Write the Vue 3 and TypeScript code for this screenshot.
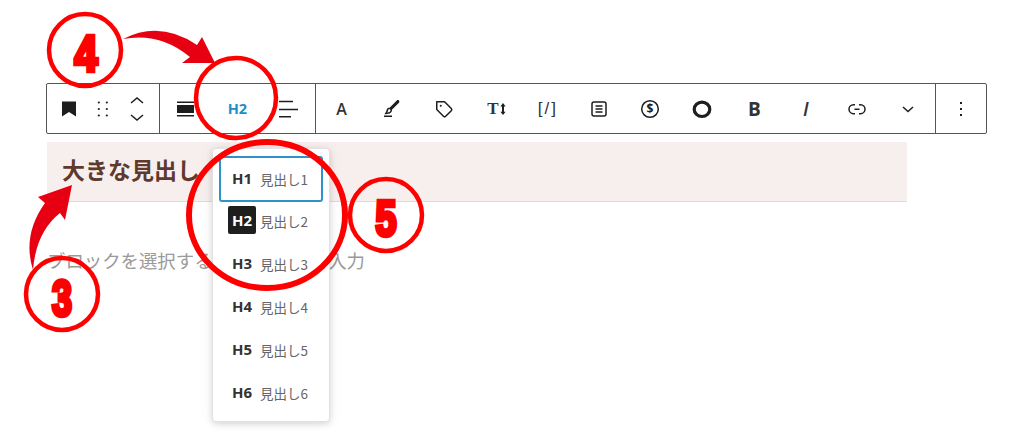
<script setup lang="ts">
interface HeadingItem {
  tag: string
  label: string
  state?: 'focus' | 'active'
}

const headings: HeadingItem[] = [
  { tag: 'H1', label: '見出し1', state: 'focus' },
  { tag: 'H2', label: '見出し2', state: 'active' },
  { tag: 'H3', label: '見出し3' },
  { tag: 'H4', label: '見出し4' },
  { tag: 'H5', label: '見出し5' },
  { tag: 'H6', label: '見出し6' }
]
</script>

<template>
  <div class="page">
    <div class="toolbar">
      <div class="group group-block">
        <button class="tool narrow">
          <svg viewBox="0 0 24 24" width="24" height="24"><path d="M5 4.5h14v15l-7-4.6-7 4.6z" /></svg>
        </button>
        <button class="tool narrow">
          <svg viewBox="0 0 24 24" width="24" height="24">
            <circle cx="7.8" cy="5.5" r="1.1" /><circle cx="15.8" cy="5.5" r="1.1" />
            <circle cx="7.8" cy="12" r="1.1" /><circle cx="15.8" cy="12" r="1.1" />
            <circle cx="7.8" cy="18.5" r="1.1" /><circle cx="15.8" cy="18.5" r="1.1" />
          </svg>
        </button>
        <button class="tool narrow">
          <svg viewBox="0 0 24 32" width="24" height="32" class="line">
            <path d="M6 10 12 5l6 5M6 22l6 5 6-5" />
          </svg>
        </button>
      </div>

      <div class="group">
        <button class="tool">
          <svg viewBox="0 0 24 24" width="24" height="24">
            <path d="M4 4.5h17V6H4zM4 8h17v8H4zM4 18h17v1.5H4z" />
          </svg>
        </button>
        <button class="tool heading-now">H2</button>
        <button class="tool">
          <svg viewBox="0 0 24 24" width="24" height="24">
            <path d="M3 3.8h14v1.5H3zM3 11.8h19v1.5H3zM3 19h12v1.5H3z" />
          </svg>
        </button>
      </div>

      <div class="group">
        <button class="tool glyph-a">A</button>
        <button class="tool">
          <svg viewBox="0 0 24 24" width="24" height="24">
            <path d="M4 20h8v-1.5H4V20zM18.9 3.5c-.6-.6-1.5-.6-2.1 0l-7.2 7.2c-.4-.1-.7 0-1.1.1-.5.2-1.5.7-1.9 2.2-.4 1.7-.8 2.2-1.1 2.7-.1.1-.2.3-.3.4l-.6 1.1H6c2 0 3.4-.4 4.7-1.4.8-.6 1.2-1.4 1.3-2.3 0-.3 0-.5-.1-.7L19 5.7c.5-.6.5-1.6-.1-2.2zM9.7 14.7c-.7.5-1.5.8-2.4 1 .2-.5.5-1.2.8-2.3.2-.6.4-1 .8-1.1.5-.1 1 .1 1.3.3.2.2.3.5.2.8 0 .3-.1.9-.7 1.3z" />
          </svg>
        </button>
        <button class="tool">
          <svg viewBox="0 0 24 24" width="24" height="24">
            <path d="M4.75 4a.75.75 0 0 0-.75.75v7.826c0 .2.08.39.22.53l6.72 6.716a2.313 2.313 0 0 0 3.276-.001l5.61-5.611-.531-.53.532.528a2.315 2.315 0 0 0 0-3.264L13.104 4.22a.75.75 0 0 0-.53-.22H4.75ZM19 12.576a.815.815 0 0 1-.236.574l-5.61 5.611a.814.814 0 0 1-1.153 0L5.5 12.264V5.5h6.763l6.5 6.502a.816.816 0 0 1 .237.574ZM8.75 9.75a1 1 0 1 0 0-2 1 1 0 0 0 0 2Z" />
          </svg>
        </button>
        <button class="tool font-size">
          <span class="serif-t">T</span>
          <svg viewBox="0 0 8 16" width="6" height="14"><path d="M4 0 7.5 4.5H5.3v7h2.2L4 16 .5 11.5h2.2v-7H.5z" /></svg>
        </button>
        <button class="tool shortcode">[/]</button>
        <button class="tool">
          <svg viewBox="0 0 24 24" width="24" height="24" class="line">
            <rect x="5" y="5" width="14" height="14" rx="2" />
            <path d="M8.5 9h7M8.5 12h7M8.5 15h7" />
          </svg>
        </button>
        <button class="tool">
          <svg viewBox="0 0 24 24" width="24" height="24" class="line">
            <circle cx="12" cy="12" r="8.3" />
            <text x="12" y="16" class="dollar">$</text>
          </svg>
        </button>
        <button class="tool">
          <svg viewBox="0 0 24 24" width="24" height="24" class="line">
            <ellipse cx="12" cy="12.3" rx="7.8" ry="7.2" class="ring" />
          </svg>
        </button>
        <button class="tool glyph-b">B</button>
        <button class="tool glyph-i">I</button>
        <button class="tool">
          <svg viewBox="0 0 24 24" width="24" height="24">
            <path d="M10 17.389H8.444A5.194 5.194 0 1 1 8.444 7H10v1.5H8.444a3.694 3.694 0 0 0 0 7.389H10v1.5ZM14 7h1.556a5.194 5.194 0 0 1 0 10.39H14v-1.5h1.556a3.694 3.694 0 0 0 0-7.39H14V7Zm-4.5 6h5v-1.5h-5V13Z" />
          </svg>
        </button>
        <button class="tool">
          <svg viewBox="0 0 24 24" width="24" height="24" class="line">
            <path d="M7 10l5 4.5 5-4.5" />
          </svg>
        </button>
      </div>

      <div class="group last">
        <button class="tool">
          <svg viewBox="0 0 24 24" width="24" height="24">
            <path d="M13 19h-2v-2h2v2zm0-6h-2v-2h2v2zm0-6h-2V5h2v2z" />
          </svg>
        </button>
      </div>
    </div>

    <h2 class="heading-block">大きな見出し</h2>
    <p class="placeholder">ブロックを選択するには 「 / 」 を入力</p>

    <div class="menu">
      <div
        v-for="item in headings"
        :key="item.tag"
        class="menu-row"
        :class="item.state"
      >
        <span class="menu-tag">{{ item.tag }}</span>
        <span class="menu-label">{{ item.label }}</span>
      </div>
    </div>

    <!-- 注釈 (赤い丸と矢印) -->
    <svg class="notes" viewBox="0 0 1024 445" width="1024" height="445">
      <path class="arrow" d="M123 39Q160 20 197 45L202 37 215 63 182 63 190 57Q160 32 123 39Z" />
      <path class="arrow" d="M72 185 38 197 45 203Q22 235 33 270 36 232 60 213L65 220Z" />
      <circle class="ring-note" cx="85" cy="50" r="36" />
      <circle class="ring-note" cx="236" cy="98" r="40" />
      <ellipse class="ring-note thick" cx="267" cy="215" rx="78" ry="73" />
      <circle class="ring-note" cx="386" cy="215" r="36" />
      <circle class="ring-note" cx="62" cy="294" r="36" />
      <text class="num" x="86" y="71" textLength="23" lengthAdjust="spacingAndGlyphs">4</text>
      <text class="num" x="386" y="236" textLength="21" lengthAdjust="spacingAndGlyphs">5</text>
      <text class="num" x="62" y="316" textLength="20" lengthAdjust="spacingAndGlyphs">3</text>
    </svg>
  </div>
</template>

<style>
html,
body {
  margin: 0;
  background: #fff;
}
</style>

<style scoped>
.page {
  position: relative;
  width: 1024px;
  height: 445px;
  overflow: hidden;
  box-sizing: border-box;
  padding: 83px 0 0 46px;
  font-family: "Open Sans", "Noto Sans CJK JP", sans-serif;
  color: #1e1e1e;
}

.toolbar {
  display: flex;
  width: 941px;
  height: 51px;
  box-sizing: border-box;
  border: 1px solid #555;
  border-radius: 2px;
}

.group {
  display: flex;
  border-right: 1px solid #555;
}

.group.last {
  border-right: none;
}

.group-block {
  padding: 0 5px;
}

.tool {
  width: 51.6px;
  padding: 0;
  border: none;
  background: none;
  display: flex;
  align-items: center;
  justify-content: center;
  font-family: inherit;
  color: #1e1e1e;
}

.tool.narrow {
  width: 34px;
}

.group .tool svg {
  fill: #1e1e1e;
  margin-left: -2px;
}

.group .tool.narrow svg {
  margin-left: 0;
}

.group .tool svg.line {
  fill: none;
  stroke: #1e1e1e;
  stroke-width: 1.5;
}

.ring {
  stroke-width: 3.2;
}

.dollar {
  fill: #1e1e1e;
  stroke: none;
  font-size: 12px;
  font-weight: 700;
  text-anchor: middle;
}

.heading-now {
  font-size: 14.5px;
  font-weight: 700;
  color: #1b8ecb;
}

.glyph-a {
  font-size: 16px;
  font-weight: 600;
  color: #333;
}

.font-size {
  gap: 3px;
}

.serif-t {
  font-family: "Liberation Serif", serif;
  font-size: 17px;
  font-weight: 700;
  color: #333;
}

.shortcode {
  font-family: "Liberation Sans", sans-serif;
  font-size: 17px;
  letter-spacing: 2px;
  color: #333;
}

.glyph-b {
  font-size: 19px;
  font-weight: 700;
  color: #333;
}

.glyph-i {
  font-size: 19px;
  font-weight: 600;
  font-style: italic;
  color: #333;
}

.heading-block {
  width: 860px;
  height: 60px;
  box-sizing: border-box;
  margin: 8px 0 0 1px;
  padding: 0 0 6px 15px;
  display: flex;
  align-items: center;
  background: #f7efee;
  border-bottom: 1px solid #f0d5d5;
  font-family: "Noto Sans CJK JP", sans-serif;
  font-size: 23px;
  font-weight: 700;
  color: #5f3a2c;
}

.placeholder {
  margin: 44px 0 0 1px;
  font-family: "Noto Sans CJK JP", sans-serif;
  font-size: 18.4px;
  line-height: 28px;
  color: #9a9a9a;
}

.menu {
  position: absolute;
  left: 212px;
  top: 148px;
  width: 118px;
  height: 274px;
  box-sizing: border-box;
  padding: 7px 6px;
  background: #fff;
  border: 1px solid #e2e2e2;
  border-radius: 4px;
  box-shadow: 0 2px 6px rgba(0, 0, 0, 0.14), 0 0 16px rgba(0, 0, 0, 0.05);
}

.menu-row {
  height: 43px;
  box-sizing: border-box;
  display: flex;
  align-items: center;
  gap: 4px;
  padding-left: 9px;
}

.menu-row.focus {
  height: 46px;
  margin-bottom: -3px;
  border: 2px solid #2f93c9;
  border-radius: 3px;
  padding-left: 7px;
}

.menu-tag {
  width: 28px;
  height: 28px;
  display: flex;
  align-items: center;
  justify-content: center;
  margin-top: -2px;
  border-radius: 2px;
  font-size: 15px;
  font-weight: 700;
  color: #333;
}

.menu-row.active .menu-tag {
  background: #1e1e1e;
  color: #fff;
}

.menu-label {
  font-family: "Noto Sans CJK JP", sans-serif;
  font-size: 13.5px;
  color: #666;
}

.notes {
  position: absolute;
  left: 0;
  top: 0;
  pointer-events: none;
}

.arrow {
  fill: #e60012;
}

.ring-note {
  fill: none;
  stroke: #f00;
  stroke-width: 4.5;
}

.ring-note.thick {
  stroke-width: 6;
}

.num {
  fill: #f00;
  stroke: #f00;
  stroke-width: 4.5;
  font-family: "Liberation Sans", sans-serif;
  font-size: 50px;
  font-weight: 700;
  text-anchor: middle;
}
</style>
